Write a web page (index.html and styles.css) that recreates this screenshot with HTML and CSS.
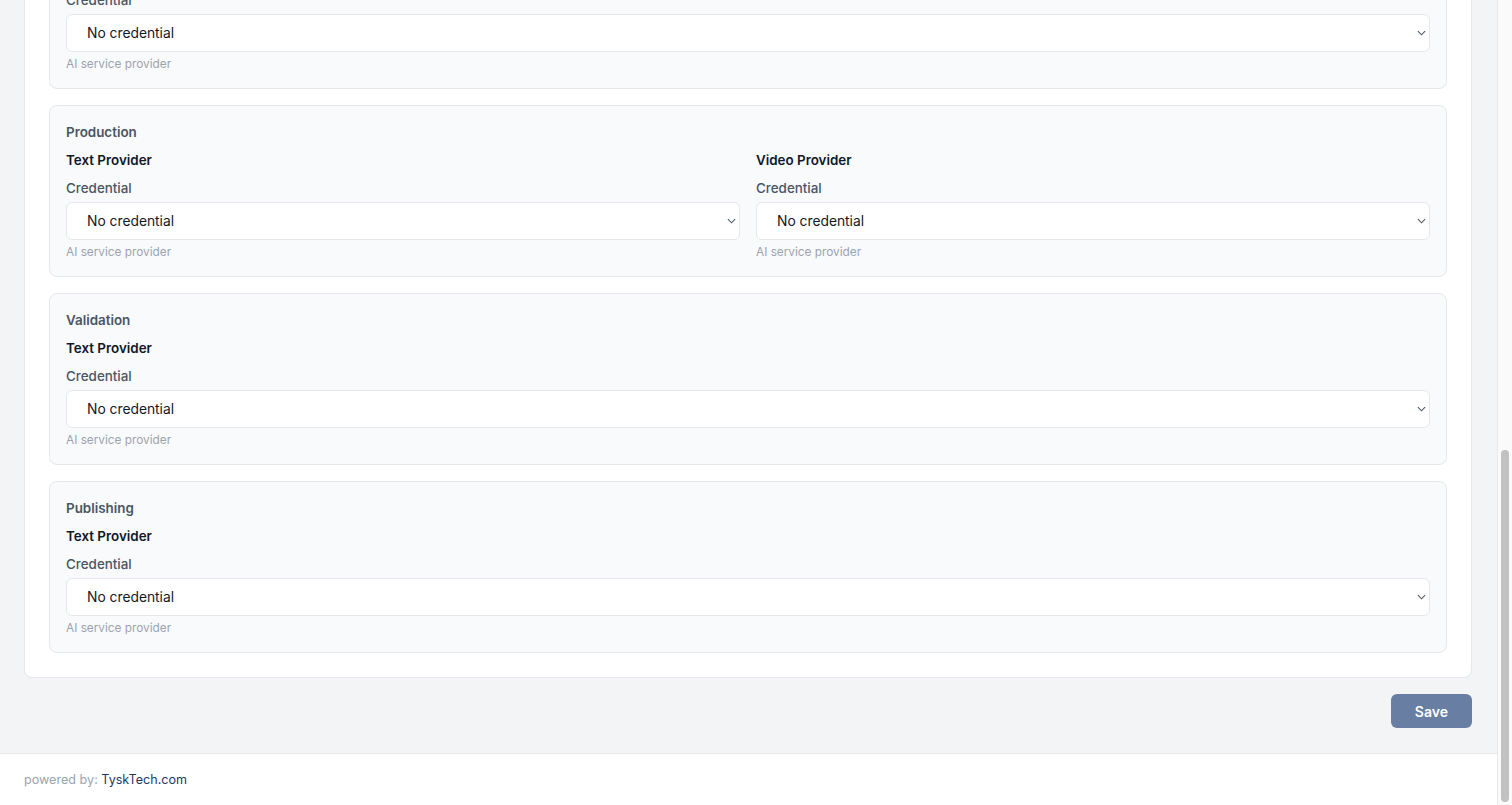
FILE: index.html
```html
<!DOCTYPE html>
<html lang="en">
<head>
    <meta charset="UTF-8">
    <meta name="viewport" content="width=device-width, initial-scale=1.0">
    <title>AI Providers</title>
    <link rel="stylesheet" href="styles.css">
</head>
<body>
    <div class="window">
        <div class="page">
            <main class="content">
                <div class="panel">
                    <!-- earlier stage, scrolled mostly out of view -->
                    <section class="stage">
                        <div class="field">
                            <label class="field-label">Credential</label>
                            <div class="select-wrap">
                                <select class="select"><option>No credential</option></select>
                                <svg class="chevron" viewBox="0 0 10 6"><path d="M1 1l4 4 4-4"/></svg>
                            </div>
                            <div class="hint">AI service provider</div>
                        </div>
                    </section>

                    <section class="stage">
                        <div class="stage-title">Production</div>
                        <div class="provider-grid">
                            <div class="field">
                                <div class="provider-name">Text Provider</div>
                                <label class="field-label">Credential</label>
                                <div class="select-wrap">
                                    <select class="select"><option>No credential</option></select>
                                    <svg class="chevron" viewBox="0 0 10 6"><path d="M1 1l4 4 4-4"/></svg>
                                </div>
                                <div class="hint">AI service provider</div>
                            </div>
                            <div class="field">
                                <div class="provider-name">Video Provider</div>
                                <label class="field-label">Credential</label>
                                <div class="select-wrap">
                                    <select class="select"><option>No credential</option></select>
                                    <svg class="chevron" viewBox="0 0 10 6"><path d="M1 1l4 4 4-4"/></svg>
                                </div>
                                <div class="hint">AI service provider</div>
                            </div>
                        </div>
                    </section>

                    <section class="stage">
                        <div class="stage-title">Validation</div>
                        <div class="field">
                            <div class="provider-name">Text Provider</div>
                            <label class="field-label">Credential</label>
                            <div class="select-wrap">
                                <select class="select"><option>No credential</option></select>
                                <svg class="chevron" viewBox="0 0 10 6"><path d="M1 1l4 4 4-4"/></svg>
                            </div>
                            <div class="hint">AI service provider</div>
                        </div>
                    </section>

                    <section class="stage">
                        <div class="stage-title">Publishing</div>
                        <div class="field">
                            <div class="provider-name">Text Provider</div>
                            <label class="field-label">Credential</label>
                            <div class="select-wrap">
                                <select class="select"><option>No credential</option></select>
                                <svg class="chevron" viewBox="0 0 10 6"><path d="M1 1l4 4 4-4"/></svg>
                            </div>
                            <div class="hint">AI service provider</div>
                        </div>
                    </section>
                </div>

                <div class="actions">
                    <button class="save-button" disabled>Save</button>
                </div>
            </main>

            <footer class="footer">
                powered by: <a href="#" class="footer-link">TyskTech.com</a>
            </footer>
        </div>

        <div class="scrollbar">
            <div class="scrollbar-thumb"></div>
        </div>
    </div>
</body>
</html>
```

FILE: styles.css
```css
* {
    margin: 0;
    padding: 0;
    box-sizing: border-box;
}

body {
    font-family: Inter, "Noto Sans", sans-serif;
    background-color: #f3f4f6;
    color: #111827;
    overflow: hidden;
}

.window {
    display: flex;
    height: 100vh;
}

/* page is scrolled to the bottom, so content is anchored there */
.page {
    flex: 1;
    display: flex;
    flex-direction: column;
    justify-content: flex-end;
    overflow: hidden;
}

.content {
    flex-shrink: 0;
    padding: 0 25px 25px 24px;
}

.panel {
    background-color: #fff;
    border: 1px solid #e5e7eb;
    border-radius: 8px;
    padding: 24px;
    display: flex;
    flex-direction: column;
    gap: 16px;
}

.stage {
    background-color: #f9fafb;
    border: 1px solid #e5e7eb;
    border-radius: 8px;
    padding: 16px;
}

.stage-title {
    font-size: 13.4px;
    line-height: 20px;
    font-weight: 600;
    color: #4b5563;
    margin-bottom: 8px;
}

.provider-grid {
    display: grid;
    grid-template-columns: 1fr 1fr;
    gap: 16px;
}

.provider-name {
    font-size: 13.4px;
    line-height: 20px;
    font-weight: 600;
    color: #111827;
    margin-bottom: 8px;
}

.field-label {
    display: block;
    font-size: 13.4px;
    line-height: 20px;
    font-weight: 500;
    color: #4b5563;
    margin-bottom: 4px;
}

.select-wrap {
    position: relative;
}

.select {
    appearance: none;
    -webkit-appearance: none;
    width: 100%;
    height: 38px;
    padding: 0 28px 0 20px;
    font-family: inherit;
    font-size: 13.8px;
    color: #111827;
    background-color: #fff;
    border: 1px solid #e5e7eb;
    border-radius: 6px;
    outline: none;
}

.chevron {
    position: absolute;
    right: 4px;
    top: 16px;
    width: 9px;
    height: 6px;
    fill: none;
    stroke: #4b5563;
    stroke-width: 1.2;
    pointer-events: none;
}

.hint {
    margin-top: 4px;
    font-size: 11.8px;
    line-height: 16px;
    color: #9ca3af;
}

.actions {
    display: flex;
    justify-content: flex-end;
    margin-top: 16px;
}

.save-button {
    padding: 0 24px;
    height: 34px;
    font-family: inherit;
    font-size: 14px;
    font-weight: 600;
    color: #fff;
    background-color: #687ea2;
    border: none;
    border-radius: 6px;
}

.footer {
    flex-shrink: 0;
    background-color: #fff;
    border-top: 1px solid #e5e7eb;
    height: 52px;
    padding: 0 24px;
    line-height: 51px;
    font-size: 12.6px;
    color: #9ca3af;
}

.footer-link {
    color: #1e3a5f;
    text-decoration: none;
}

/* visible page scrollbar */
.scrollbar {
    width: 15px;
    background-color: #fafafa;
    border-left: 1px solid #e8e8e8;
    display: flex;
    flex-direction: column;
    justify-content: flex-end;
    padding: 0 3px 3px 3px;
}

.scrollbar-thumb {
    height: 352px;
    background-color: #c1c1c1;
    border-radius: 5px;
}
```
